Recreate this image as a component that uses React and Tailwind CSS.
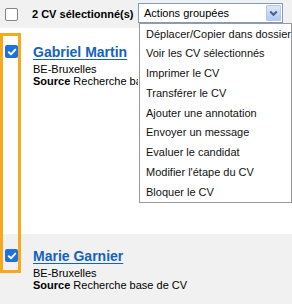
import React from "react";

const actions = [
  "Déplacer/Copier dans dossier",
  "Voir les CV sélectionnés",
  "Imprimer le CV",
  "Transférer le CV",
  "Ajouter une annotation",
  "Envoyer un message",
  "Evaluer le candidat",
  "Modifier l'étape du CV",
  "Bloquer le CV",
];

const candidates = [
  { name: "Gabriel Martin", city: "BE-Bruxelles", source: "Recherche base de CV", bg: "bg-white", h: "h-[206px]", pt: "pt-[16px]", clip: "w-[105px] overflow-hidden" },
  { name: "Marie Garnier", city: "BE-Bruxelles", source: "Recherche base de CV", bg: "bg-[#f1f1f1]", h: "flex-1", pt: "pt-[14px]", clip: "" },
];

function Checked() {
  return (
    <div className="w-[13px] h-[13px] rounded-[2px] bg-[#1d72e0] flex items-center justify-center shrink-0">
      <svg width="10" height="10" viewBox="0 0 10 10">
        <path d="M1.8 5.2 L4 7.3 L8.3 2.6" fill="none" stroke="white" strokeWidth="1.9" strokeLinecap="round" strokeLinejoin="round" />
      </svg>
    </div>
  );
}

function Candidate({ c }) {
  return (
    <div className={`${c.bg} ${c.h} ${c.pt} flex pl-[5px]`}>
      <div className="mt-[1px]">
        <Checked />
      </div>
      <div className={`ml-[15px] text-black ${c.clip}`}>
        <div className="text-[14px] leading-[16px] font-bold text-[#1462bf] underline underline-offset-[2px] whitespace-nowrap">
          {c.name}
        </div>
        <div className="mt-[3px] text-[11px] leading-[12px]">{c.city}</div>
        <div className="text-[11px] leading-[12px] whitespace-nowrap">
          <span className="font-bold">Source</span> {c.source}
        </div>
      </div>
    </div>
  );
}

export default function App() {
  return (
    <div
      className="relative w-[292px] h-[304px] overflow-hidden bg-white flex flex-col"
      style={{ fontFamily: '"Liberation Sans", Arial, sans-serif' }}
    >
      <div className="h-[28px] shrink-0 bg-[#f1f1f1] flex items-center pl-[5px]">
        <div className="w-[13px] h-[13px] rounded-[2px] border border-[#858585] bg-white shrink-0" />
        <div className="ml-[14px] w-[106px] text-[11px] font-bold text-black whitespace-nowrap">
          2 CV sélectionné(s)
        </div>
        <div className="self-start mt-[3px] w-[145px] h-[20px] border border-[#7f9db9] bg-white flex items-center justify-between pl-[5px] pr-[1px]">
          <span className="text-[11px] text-black">Actions groupées</span>
          <div className="w-[15px] h-[16px] rounded-[1px] border border-[#b5c8ee] bg-gradient-to-b from-[#dfe8fa] to-[#b3c9f3] flex items-center justify-center">
            <svg width="9" height="7" viewBox="0 0 9 7">
              <path d="M1.2 1.5 L4.5 4.8 L7.8 1.5" fill="none" stroke="#4d6185" strokeWidth="2" />
            </svg>
          </div>
        </div>
      </div>

      {candidates.map((c) => (
        <Candidate key={c.name} c={c} />
      ))}

      <div className="absolute left-0 top-[33px] w-[21px] h-[240px] border-[3px] border-[#f7a81b]" />

      <div className="absolute left-[139px] top-[23px] w-[153px] border border-[#9a9a9a] bg-white overflow-hidden">
        {actions.map((a) => (
          <div key={a} className="h-[19.75px] flex items-center pl-[6px] text-[11px] text-[#111] whitespace-nowrap">
            {a}
          </div>
        ))}
      </div>
    </div>
  );
}
